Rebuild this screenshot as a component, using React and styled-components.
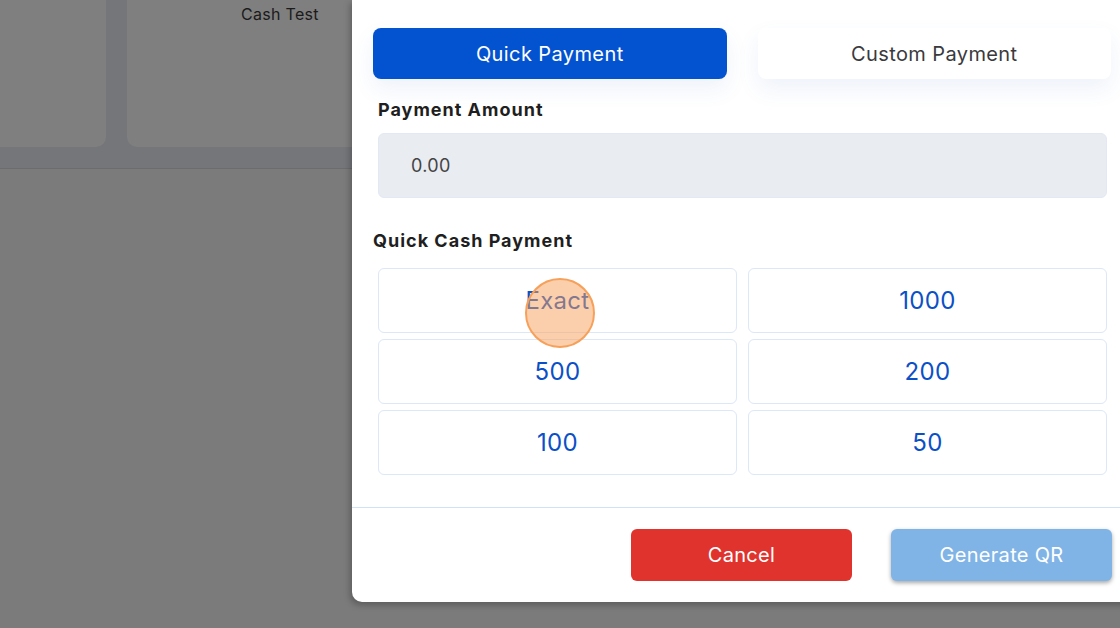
import styled, { createGlobalStyle } from 'styled-components';

const GlobalStyle = createGlobalStyle`
    body {
        margin: 0;
        background-color: #7b7b7b;
        font-family: Inter, "Noto Sans", sans-serif;
    }
`;

const Page = styled.div`
    position: relative;
    display: flex;
    width: 1120px;
    height: 628px;
    overflow: hidden;
    background-color: #7b7b7b;
`;

const Backdrop = styled.div`
    flex: 0 0 352px;
    overflow: hidden;
`;

const BackdropRow = styled.div`
    display: flex;
    gap: 21px;
    margin-left: -100px;
    padding-bottom: 21px;
    background-color: #75767a;
    border-bottom: 1px solid #6c6c6c;
`;

const BackdropCard = styled.div`
    flex: 0 0 ${(p) => p.width}px;
    height: 147px;
    box-sizing: border-box;
    padding: 4px 0 0 114px;
    background-color: #7f7f7f;
    border-radius: 0 0 10px 10px;
    color: #1b1b1b;
    font-size: 16px;
    letter-spacing: 0.3px;
`;

const Modal = styled.div`
    flex: 0 0 780px;
    height: 602px;
    display: flex;
    flex-direction: column;
    background-color: white;
    border-radius: 0 0 0 10px;
    box-shadow: -2px 3px 6px rgba(0, 0, 0, 0.25);
`;

const ModalBody = styled.div`
    padding: 28px 21px 0 21px;
`;

const Tabs = styled.div`
    display: grid;
    grid-template-columns: 1fr 1fr;
    gap: 31px;
`;

const Tab = styled.button`
    height: 51px;
    border: none;
    border-radius: 8px;
    background-color: ${(p) => (p.active ? '#0353d1' : 'white')};
    color: ${(p) => (p.active ? 'white' : '#3a3a3d')};
    font-family: inherit;
    font-size: 20px;
    letter-spacing: 0.4px;
    box-shadow: 0 10px 22px rgba(70, 110, 200, 0.09);
`;

const Section = styled.div`
    padding: 0 4px 0 5px;
    margin-top: 20px;
`;

const Label = styled.div`
    font-size: 18px;
    line-height: 22px;
    font-weight: 650;
    letter-spacing: 1px;
    color: #1f1f22;
`;

const AmountBox = styled.div`
    margin-top: 12px;
    height: 65px;
    box-sizing: border-box;
    display: flex;
    align-items: center;
    padding-left: 32px;
    background-color: #e9ecf0;
    border: 1px solid #e2e9f5;
    border-radius: 6px;
    color: #444;
    font-size: 18px;
    letter-spacing: 0.3px;
`;

const CashSection = styled.div`
    margin-top: 32px;
    padding: 0 4px 0 0;
`;

const CashGrid = styled.div`
    display: grid;
    grid-template-columns: 1fr 1fr;
    column-gap: 11px;
    row-gap: 6px;
    margin: 16px 0 0 5px;
`;

const CashButton = styled.button`
    height: 65px;
    border: 1px solid #dce7f7;
    border-radius: 6px;
    background-color: white;
    color: #0b50c6;
    font-family: inherit;
    font-size: 24px;
    letter-spacing: 0.3px;
`;

const Divider = styled.div`
    margin-top: 32px;
    border-top: 1px solid #d2e2f2;
`;

const Footer = styled.div`
    display: flex;
    justify-content: flex-end;
    gap: 39px;
    padding: 21px 20px 0 0;
`;

const FooterButton = styled.button`
    width: 221px;
    height: 52px;
    border: none;
    border-radius: 6px;
    background-color: ${(p) => p.color};
    color: white;
    font-family: inherit;
    font-size: 20px;
    letter-spacing: 0.3px;
    box-shadow: ${(p) => (p.raised ? '0 2px 4px rgba(0, 0, 0, 0.35)' : 'none')};
`;

const ClickMarker = styled.div`
    position: absolute;
    left: 525px;
    top: 278px;
    width: 70px;
    height: 70px;
    box-sizing: border-box;
    border-radius: 50%;
    border: 2px solid #f6a05a;
    background-color: rgba(250, 160, 90, 0.5);
    pointer-events: none;
`;

const amounts = ['Exact', '1000', '500', '200', '100', '50'];

function App() {
    return (
        <Page>
            <GlobalStyle />
            <Backdrop>
                <BackdropRow>
                    <BackdropCard width={206} />
                    <BackdropCard width={400}>Cash Test</BackdropCard>
                </BackdropRow>
            </Backdrop>
            <Modal>
                <ModalBody>
                    <Tabs>
                        <Tab active>Quick Payment</Tab>
                        <Tab>Custom Payment</Tab>
                    </Tabs>
                    <Section>
                        <Label>Payment Amount</Label>
                        <AmountBox>0.00</AmountBox>
                    </Section>
                    <CashSection>
                        <Label>Quick Cash Payment</Label>
                        <CashGrid>
                            {amounts.map((a) => (
                                <CashButton key={a}>{a}</CashButton>
                            ))}
                        </CashGrid>
                    </CashSection>
                </ModalBody>
                <Divider />
                <Footer>
                    <FooterButton color="#e0332d">Cancel</FooterButton>
                    <FooterButton color="#80b4e6" raised>
                        Generate QR
                    </FooterButton>
                </Footer>
            </Modal>
            <ClickMarker />
        </Page>
    );
}

export default App;
